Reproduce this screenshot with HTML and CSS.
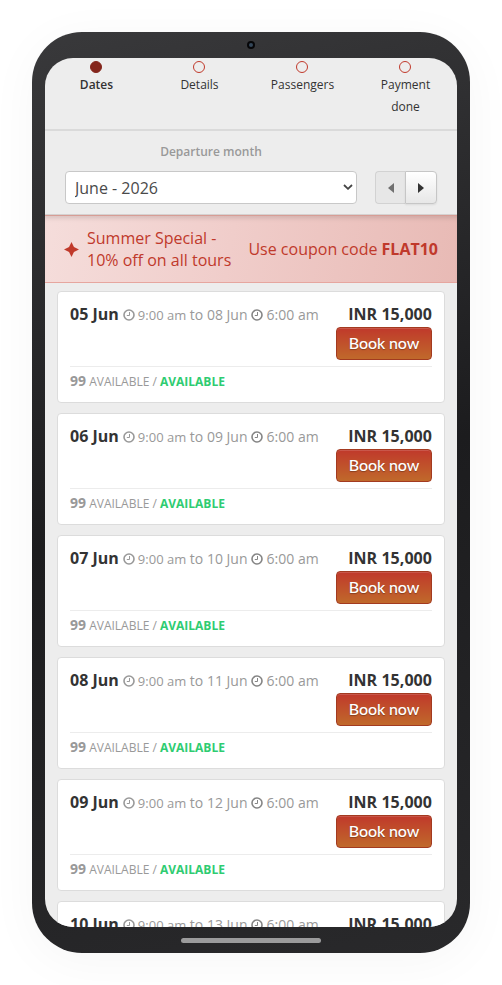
FILE: index.html
```html
<!DOCTYPE html>
<html lang="en">
<head>
<meta charset="utf-8">
<title>Tour dates</title>
<link rel="stylesheet" href="styles.css">
</head>
<body>
<svg class="defs" aria-hidden="true">
  <symbol id="clock" viewBox="0 0 12 12"><circle cx="6" cy="6" r="5" fill="none" stroke="currentColor" stroke-width="1.6"/><path d="M6.5 3v3.5H3.8" fill="none" stroke="currentColor" stroke-width="1"/></symbol>
</svg>
<main class="phone">
  <div class="bezel-top"><span class="camera"></span></div>
  <div class="screen">
    <ol class="steps">
      <li class="step active"><i></i><span>Dates</span></li>
      <li class="step"><i></i><span>Details</span></li>
      <li class="step"><i></i><span>Passengers</span></li>
      <li class="step"><i></i><span>Payment<br>done</span></li>
    </ol>
    <section class="filter">
      <div class="month">
        <label for="month">Departure month</label>
        <div class="select">
          <select id="month"><option>June - 2026</option></select>
          <svg class="chevron" viewBox="0 0 10 6"><path d="M1 1l4 3.8L9 1" fill="none" stroke="#444" stroke-width="1.8"/></svg>
        </div>
      </div>
      <div class="pager">
        <button class="prev" aria-label="Previous"><svg viewBox="0 0 6 10"><path d="M6 0v10L0 5z"/></svg></button>
        <button class="next" aria-label="Next"><svg viewBox="0 0 6 10"><path d="M0 0v10l6-5z"/></svg></button>
      </div>
    </section>
    <section class="promo">
      <svg class="star" viewBox="0 0 14 14"><path d="M7 0l2.3 4.7L14 7 9.3 9.3 7 14 4.7 9.3 0 7l4.7-2.3z"/></svg>
      <p class="offer">Summer Special -<br>10% off on all tours</p>
      <p class="coupon">Use coupon code <b>FLAT10</b></p>
    </section>
    <section class="list">
      <article class="card">
        <div class="row"><p class="when"><b>05 Jun</b> <svg><use href="#clock"/></svg> <small>9:00 am</small> to 08 Jun <svg class="end"><use href="#clock"/></svg> 6:00 am</p><div class="buy"><b>INR 15,000</b><button>Book now</button></div></div>
        <p class="stock"><b>99</b> AVAILABLE / <strong>AVAILABLE</strong></p>
      </article>
      <article class="card">
        <div class="row"><p class="when"><b>06 Jun</b> <svg><use href="#clock"/></svg> <small>9:00 am</small> to 09 Jun <svg class="end"><use href="#clock"/></svg> 6:00 am</p><div class="buy"><b>INR 15,000</b><button>Book now</button></div></div>
        <p class="stock"><b>99</b> AVAILABLE / <strong>AVAILABLE</strong></p>
      </article>
      <article class="card">
        <div class="row"><p class="when"><b>07 Jun</b> <svg><use href="#clock"/></svg> <small>9:00 am</small> to 10 Jun <svg class="end"><use href="#clock"/></svg> 6:00 am</p><div class="buy"><b>INR 15,000</b><button>Book now</button></div></div>
        <p class="stock"><b>99</b> AVAILABLE / <strong>AVAILABLE</strong></p>
      </article>
      <article class="card">
        <div class="row"><p class="when"><b>08 Jun</b> <svg><use href="#clock"/></svg> <small>9:00 am</small> to 11 Jun <svg class="end"><use href="#clock"/></svg> 6:00 am</p><div class="buy"><b>INR 15,000</b><button>Book now</button></div></div>
        <p class="stock"><b>99</b> AVAILABLE / <strong>AVAILABLE</strong></p>
      </article>
      <article class="card">
        <div class="row"><p class="when"><b>09 Jun</b> <svg><use href="#clock"/></svg> <small>9:00 am</small> to 12 Jun <svg class="end"><use href="#clock"/></svg> 6:00 am</p><div class="buy"><b>INR 15,000</b><button>Book now</button></div></div>
        <p class="stock"><b>99</b> AVAILABLE / <strong>AVAILABLE</strong></p>
      </article>
      <article class="card">
        <div class="row"><p class="when"><b>10 Jun</b> <svg><use href="#clock"/></svg> <small>9:00 am</small> to 13 Jun <svg class="end"><use href="#clock"/></svg> 6:00 am</p><div class="buy"><b>INR 15,000</b></div></div>
      </article>
    </section>
  </div>
  <div class="bezel-bottom"><span class="homebar"></span></div>
</main>
</body>
</html>
```
FILE: styles.css
```css
* { box-sizing: border-box; }
body {
  margin: 0;
  padding: 32px;
  height: 985px;
  overflow: hidden;
  background: #fff;
  font-family: "Open Sans", sans-serif;
  color: #333;
}
p, ol { margin: 0; padding: 0; }
button { padding: 0; font: inherit; }
.defs { display: none; }

.phone {
  width: 438px;
  height: 921px;
  padding: 0 13px;
  border-radius: 50px;
  background: linear-gradient(165deg, #39393b 0%, #1c1c1e 50%, #29292b 100%);
  box-shadow: 0 8px 50px rgba(0, 0, 0, .04);
}
.bezel-top { height: 26px; display: flex; justify-content: center; align-items: center; }
.camera { width: 8px; height: 8px; border: 2px solid #060608; border-radius: 50%; background: #34475a; }
.bezel-bottom { height: 26px; display: flex; justify-content: center; align-items: center; }
.homebar { width: 140px; height: 5px; border-radius: 3px; background: #9b9b9c; }

.screen {
  height: 869px;
  overflow: hidden;
  border-radius: 28px;
  background: #ededed;
}

.steps {
  display: grid;
  grid-template-columns: repeat(4, 103px);
  height: 73px;
  padding-top: 3px;
  border-bottom: 2px solid #dadada;
  list-style: none;
  font-size: 12px;
  line-height: 22px;
  text-align: center;
}
.step { display: flex; flex-direction: column; align-items: center; }
.step i { flex: none; width: 12px; height: 12px; margin: 0 1px 1px 0; border: 1px solid #c0392b; border-radius: 50%; }
.active { font-weight: 600; }
.active i { background: #84261c; border-color: #84261c; }

.filter {
  display: flex;
  justify-content: space-between;
  align-items: flex-end;
  height: 84px;
  padding: 0 20px 10px;
  border-bottom: 1px solid #d5d1d0;
}
.month { width: 292px; }
.month label {
  display: block;
  margin-bottom: 8px;
  font-size: 12px;
  line-height: 22px;
  font-weight: 600;
  text-align: center;
  color: #999;
}
.select { position: relative; }
select {
  display: block;
  width: 292px;
  height: 33px;
  padding: 0 9px;
  appearance: none;
  border: 1px solid #c8c8c8;
  border-radius: 4px;
  background: #fff;
  color: #4a4a4a;
  font: 16px "Open Sans", sans-serif;
}
.chevron { position: absolute; right: 4px; top: 13px; width: 10px; height: 6px; }
.pager { display: flex; width: 62px; height: 33px; }
.pager button { display: flex; align-items: center; justify-content: center; border: 1px solid #c6c6c6; }
.pager svg { width: 6px; height: 10px; }
.pager .prev { width: 30px; border-color: #d2d2d2; border-right: 0; border-radius: 4px 0 0 4px; background: #e7e7e7; fill: #707070; }
.pager .next { width: 32px; border-radius: 0 4px 4px 0; background: linear-gradient(#fff, #e7e7e7); box-shadow: 0 1px 2px rgba(0, 0, 0, .08); fill: #333; }

.promo {
  display: flex;
  align-items: center;
  height: 68px;
  padding: 0 19px;
  border-top: 1px solid #d79d95;
  border-bottom: 1px solid #e6a69f;
  background: linear-gradient(100deg, #f5dddb, #f0cdca 45%, #e8bab5);
  box-shadow: inset 0 5px 5px -3px rgba(0, 0, 0, .13);
  color: #c0392b;
  font-size: 16px;
  line-height: 22px;
}
.star { width: 15px; height: 15px; margin-right: 8px; fill: #c0392b; }
.offer { white-space: nowrap; }
.coupon { margin-left: auto; white-space: nowrap; }

.list { display: flex; flex-direction: column; gap: 10px; padding: 8px 12px; }
.card {
  flex: none;
  height: 112px;
  padding: 10px 12px;
  border: 1px solid #dcdcdc;
  border-radius: 4px;
  background: #fff;
}
.row { display: flex; justify-content: space-between; height: 65px; border-bottom: 1px solid #ececec; }
.when { color: #999; font-size: 14px; line-height: 24px; white-space: nowrap; }
.when b { color: #333; font-size: 16px; }
.when small { font-size: 13px; }
.when svg { width: 12px; height: 12px; margin: 0 -.4px 0 .2px; vertical-align: -1px; }
.when .end { color: #858585; }
.buy { display: flex; flex-direction: column; align-items: flex-end; font-size: 16px; line-height: 24px; }
.buy b { letter-spacing: .05px; }
.buy button {
  width: 96px;
  height: 33px;
  margin-top: 1px;
  padding-bottom: 2px;
  border: 1px solid #a33a20;
  border-radius: 4px;
  background: linear-gradient(#c0392b, #c0692b);
  box-shadow: inset 0 1px 0 rgba(255, 255, 255, .15);
  color: #fff;
  font: 500 16px Lato, sans-serif;
  letter-spacing: -.1px;
  text-shadow: 0 1px 1px rgba(0, 0, 0, .3);
}
.stock { margin-top: 3px; color: #999; font-size: 12px; line-height: 22px; }
.stock b { font-size: 14px; font-weight: 700; }
.stock strong { color: #2ecc71; }
```
